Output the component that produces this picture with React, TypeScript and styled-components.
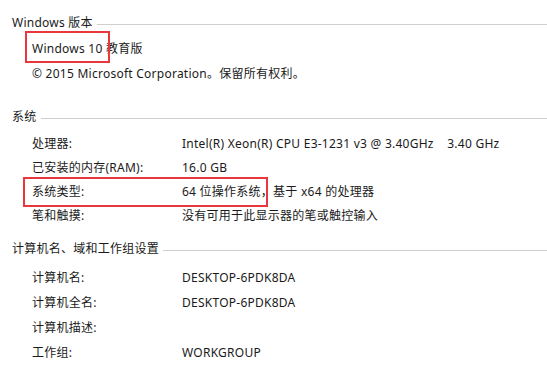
import React from "react";
import styled, { createGlobalStyle } from "styled-components";

const GlobalStyle = createGlobalStyle`
  html, body {
    margin: 0;
    padding: 0;
    background: #ffffff;
  }
  body {
    font-family: "Noto Sans", "Noto Sans CJK SC", sans-serif;
    font-size: 12px;
    letter-spacing: 0.25px;
    color: #1a1a1a;
  }
`;

const Page = styled.div`
  width: 547px;
  height: 371px;
  overflow: hidden;
  padding-top: 14px;
  box-sizing: border-box;
`;

const Section = styled.section<{ $top: number }>`
  margin-top: ${(p) => p.$top}px;
`;

const Header = styled.div<{ $after: number }>`
  display: flex;
  align-items: center;
  gap: 4px;
  height: 18px;
  line-height: 18px;
  padding-left: 12px;
  margin-bottom: ${(p) => p.$after}px;
`;

const HeaderRule = styled.div`
  flex: 1;
  height: 1px;
  margin-top: 3px;
  background: #cfcfcf;
`;

const Row = styled.div<{ $h: number; $marked?: boolean }>`
  position: relative;
  display: grid;
  grid-template-columns: 150px 1fr;
  height: ${(p) => p.$h}px;
  line-height: ${(p) => p.$h}px;
  padding-left: 32px;
  white-space: pre;

  ${(p) =>
    p.$marked &&
    `
    &::after {
      content: "";
      position: absolute;
      left: 23px;
      top: -3px;
      width: 245px;
      height: 30px;
      border: 2px solid #e8383d;
      box-sizing: border-box;
    }
  `}
`;

const Line = styled.div`
  height: 25px;
  line-height: 25px;
  padding-left: 32px;
  white-space: pre;
`;

const Boxed = styled.span`
  position: relative;

  &::after {
    content: "";
    position: absolute;
    left: -7px;
    right: -7px;
    top: -9px;
    bottom: -6px;
    border: 2px solid #e8383d;
  }
`;

type Item = { label: string; value: string; marked?: boolean };

const systemRows: Item[] = [
  { label: "处理器:", value: "Intel(R) Xeon(R) CPU E3-1231 v3 @ 3.40GHz    3.40 GHz" },
  { label: "已安装的内存(RAM):", value: "16.0 GB" },
  { label: "系统类型:", value: "64 位操作系统，基于 x64 的处理器", marked: true },
  { label: "笔和触摸:", value: "没有可用于此显示器的笔或触控输入" },
];

const computerRows: Item[] = [
  { label: "计算机名:", value: "DESKTOP-6PDK8DA" },
  { label: "计算机全名:", value: "DESKTOP-6PDK8DA" },
  { label: "计算机描述:", value: "" },
  { label: "工作组:", value: "WORKGROUP" },
];

const App: React.FC = () => {
  return (
    <>
      <GlobalStyle />
      <Page>
        <Section $top={0}>
          <Header $after={4}>
            <span>Windows 版本</span>
            <HeaderRule />
          </Header>
          <Line>
            <Boxed>Windows 10</Boxed> 教育版
          </Line>
          <Line>© 2015 Microsoft Corporation。保留所有权利。</Line>
        </Section>

        <Section $top={22}>
          <Header $after={6}>
            <span>系统</span>
            <HeaderRule />
          </Header>
          {systemRows.map((r) => (
            <Row key={r.label} $h={24} $marked={r.marked}>
              <span>{r.label}</span>
              <span>{r.value}</span>
            </Row>
          ))}
        </Section>

        <Section $top={12}>
          <Header $after={7}>
            <span>计算机名、域和工作组设置</span>
            <HeaderRule />
          </Header>
          {computerRows.map((r) => (
            <Row key={r.label} $h={25}>
              <span>{r.label}</span>
              <span>{r.value}</span>
            </Row>
          ))}
        </Section>
      </Page>
    </>
  );
};

export default App;
